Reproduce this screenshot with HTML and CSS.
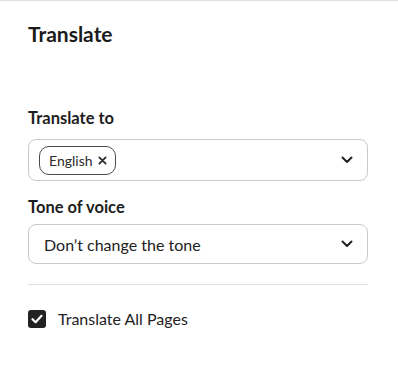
FILE: index.html
```html
<!DOCTYPE html>
<html lang="en">
<head>
<meta charset="utf-8">
<title>Translate</title>
<link rel="stylesheet" href="styles.css">
</head>
<body>
<div class="panel">
  <h1 class="title">Translate</h1>
  <div class="field-group first">
    <label class="label">Translate to</label>
    <div class="select select-tags">
      <span class="chip">English
        <svg class="chip-x" width="9" height="9" viewBox="0 0 10 10"><path d="M1.5 1.5 L8.5 8.5 M8.5 1.5 L1.5 8.5" stroke="#2c2c2c" stroke-width="2" stroke-linecap="round"/></svg>
      </span>
      <svg class="chev" width="12" height="8" viewBox="0 0 12 8"><path d="M1.5 1.5 L6 6 L10.5 1.5" fill="none" stroke="#222" stroke-width="2" stroke-linecap="round" stroke-linejoin="round"/></svg>
    </div>
  </div>
  <div class="field-group second">
    <label class="label">Tone of voice</label>
    <div class="select">
      <span class="value">Don’t change the tone</span>
      <svg class="chev" width="12" height="8" viewBox="0 0 12 8"><path d="M1.5 1.5 L6 6 L10.5 1.5" fill="none" stroke="#222" stroke-width="2" stroke-linecap="round" stroke-linejoin="round"/></svg>
    </div>
  </div>
  <hr class="divider">
  <label class="check-row">
    <span class="checkbox">
      <svg width="12" height="10" viewBox="0 0 12 10"><path d="M1.5 5.2 L4.6 8.2 L10.5 1.8" fill="none" stroke="#fff" stroke-width="2.2" stroke-linecap="round" stroke-linejoin="round"/></svg>
    </span>
    <span class="check-label">Translate All Pages</span>
  </label>
</div>
</body>
</html>
```

FILE: styles.css
```css
* { box-sizing: border-box; }
html, body { margin: 0; padding: 0; background: #fff; }
body {
  font-family: Lato, "Noto Sans", sans-serif;
  color: #222;
}
.panel {
  border-top: 1px solid #e1e1e1;
  padding: 0 30px 0 28px;
}
.title {
  margin: 0;
  padding-top: 18px;
  font-size: 21px;
  line-height: 30px;
  font-weight: 700;
  color: #1b1b1b;
}
.field-group { display: flex; flex-direction: column; }
.field-group.first { margin-top: 59px; }
.field-group.first .label { margin-bottom: 11px; }
.field-group.second { margin-top: 16px; }
.field-group.second .label { margin-bottom: 7px; }
.label {
  font-size: 16.5px;
  line-height: 20px;
  font-weight: 700;
  color: #1d1d1d;
}
.select {
  height: 40px;
  border: 1px solid #cacaca;
  border-radius: 8px;
  display: flex;
  align-items: center;
  justify-content: space-between;
  padding: 0 14px 0 15px;
}
.select-tags {
  height: 42px;
  padding-left: 10px;
}
.chip {
  display: inline-flex;
  align-items: center;
  gap: 5px;
  height: 29px;
  padding: 0 8px 0 9px;
  border: 1px solid #4b4b4b;
  border-radius: 10px;
  font-size: 14px;
  color: #2c2c2c;
}
.chip-x { display: block; }
.value { font-size: 16px; color: #222; }
.chev { display: block; }
.divider {
  border: 0;
  border-top: 1px solid #e1e1e1;
  margin: 20px 0 0;
}
.check-row {
  display: flex;
  align-items: center;
  gap: 12px;
  margin-top: 24px;
}
.checkbox {
  width: 18px;
  height: 18px;
  background: #222;
  border-radius: 3px;
  display: flex;
  align-items: center;
  justify-content: center;
}
.check-label { font-size: 16px; color: #222; }
```
